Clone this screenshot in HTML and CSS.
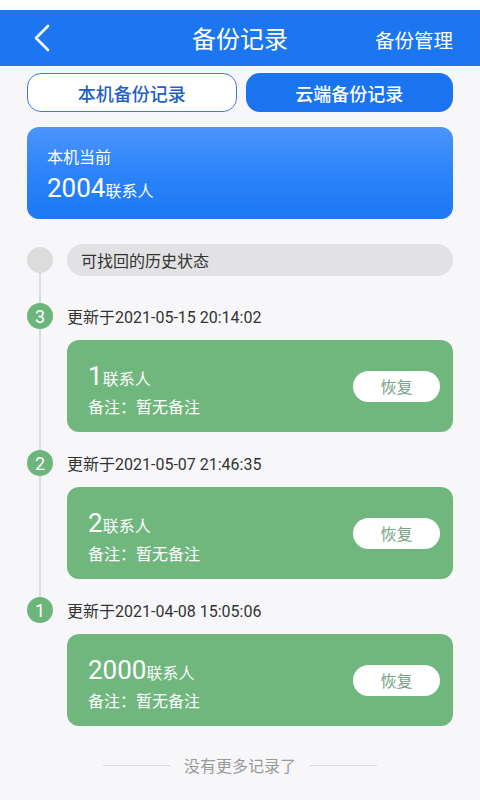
FILE: index.html
```html
<!DOCTYPE html>
<html lang="zh-CN">
<head>
<meta charset="utf-8">
<title>备份记录</title>
<link rel="stylesheet" href="styles.css">
</head>
<body>
<div class="status"></div>
<header class="header">
  <span class="back"><svg width="18" height="28" viewBox="0 0 18 28"><path d="M15 2 L3 14 L15 26" fill="none" stroke="#fff" stroke-width="2.6" stroke-linecap="round" stroke-linejoin="round"/></svg></span>
  <h1 class="title">备份记录</h1>
  <span class="manage">备份管理</span>
</header>
<div class="tabs">
  <div class="tab tab-outline">本机备份记录</div>
  <div class="tab tab-active">云端备份记录</div>
</div>
<section class="summary">
  <div class="summary-label">本机当前</div>
  <div class="summary-count"><span class="num">2004</span><span class="unit">联系人</span></div>
</section>
<section class="timeline">
  <div class="tl-head">
    <span class="dot dot-gray"></span>
    <div class="pill">可找回的历史状态</div>
  </div>
  <div class="item">
    <div class="item-row"><span class="dot dot-green">3</span><span class="time">更新于2021-05-15 20:14:02</span></div>
    <div class="card">
      <div class="card-text">
        <div class="card-count"><span class="num">1</span><span class="unit">联系人</span></div>
        <div class="card-note">备注：暂无备注</div>
      </div>
      <div class="restore">恢复</div>
    </div>
  </div>
  <div class="item">
    <div class="item-row"><span class="dot dot-green">2</span><span class="time">更新于2021-05-07 21:46:35</span></div>
    <div class="card">
      <div class="card-text">
        <div class="card-count"><span class="num">2</span><span class="unit">联系人</span></div>
        <div class="card-note">备注：暂无备注</div>
      </div>
      <div class="restore">恢复</div>
    </div>
  </div>
  <div class="item">
    <div class="item-row"><span class="dot dot-green">1</span><span class="time">更新于2021-04-08 15:05:06</span></div>
    <div class="card">
      <div class="card-text">
        <div class="card-count"><span class="num">2000</span><span class="unit">联系人</span></div>
        <div class="card-note">备注：暂无备注</div>
      </div>
      <div class="restore">恢复</div>
    </div>
  </div>
</section>
<footer class="end">
  <span class="end-line"></span>
  <span class="end-text">没有更多记录了</span>
  <span class="end-line"></span>
</footer>
</body>
</html>
```
FILE: styles.css
```css
* { box-sizing: border-box; }
html, body { margin: 0; padding: 0; }
body {
  width: 480px;
  height: 800px;
  overflow: hidden;
  background: #f7f7f9;
  font-family: Roboto, "Noto Sans CJK SC", sans-serif;
  color: #333;
}
.status { height: 10px; background: #fff; }
.header {
  height: 56px;
  background: #1c76f2;
  display: flex;
  align-items: center;
  padding: 0 27px 0 33px;
  color: #fff;
}
.back { display: flex; width: 20px; height: 28px; }
.title {
  flex: 1;
  margin: 0;
  text-align: center;
  font-size: 24px;
  font-weight: 400;
  padding-left: 52px;
  line-height: 56px;
  padding-top: 3px;
}
.manage { font-size: 19.5px; padding-top: 3px; }
.tabs {
  display: flex;
  gap: 9px;
  padding: 7px 27px 0;
}
.tab {
  flex: 1;
  height: 39px;
  border-radius: 14px;
  display: flex;
  align-items: center;
  justify-content: center;
  font-size: 18px;
  font-weight: 500;
}
.tab-outline {
  background: #fff;
  border: 1.5px solid #3a7ddc;
  color: #1f5fc6;
}
.tab-active {
  background: #1a74ef;
  color: #fff;
}
.summary {
  margin: 15px 27px 0;
  height: 92px;
  border-radius: 12px;
  background: linear-gradient(180deg, #4c94fb 0%, #2c84f8 50%, #1c77f5 100%);
  color: #fff;
  padding: 20px 20px 0;
}
.summary-label { font-size: 16px; line-height: 22px; }
.summary-count { margin-top: 4px; line-height: 30px; }
.num { font-size: 26px; }
.unit { font-size: 16px; }
.timeline {
  position: relative;
  padding: 25px 27px 0;
}
.timeline::before {
  content: "";
  position: absolute;
  left: 39px;
  top: 52px;
  width: 1.5px;
  height: 330px;
  background: #dcdcde;
}
.tl-head {
  display: flex;
  align-items: center;
  gap: 14px;
}
.dot {
  width: 26px;
  height: 26px;
  border-radius: 50%;
  flex: none;
  position: relative;
  display: flex;
  align-items: center;
  justify-content: center;
}
.dot-gray { background: #dcdcdd; }
.dot-green {
  background: #6cb57b;
  color: #fff;
  font-size: 18px;
}
.pill {
  flex: 1;
  height: 32px;
  border-radius: 16px;
  background: #e2e1e3;
  display: flex;
  align-items: center;
  padding-left: 14px;
  font-size: 16px;
  color: #333;
}
.item { margin-top: 27px; }
.item + .item { margin-top: 18px; }
.item-row {
  display: flex;
  align-items: center;
  gap: 14px;
  height: 26px;
}
.time { font-size: 16px; color: #333; }
.card {
  margin: 11px 0 0 40px;
  height: 92px;
  border-radius: 12px;
  background: #70b77e;
  color: #fff;
  display: flex;
  align-items: center;
  justify-content: space-between;
  padding: 0 13px 0 21px;
}
.card-text { padding-top: 8px; }
.card-count { line-height: 30px; }
.card-note { font-size: 16px; line-height: 22px; margin-top: 2px; }
.restore {
  width: 87px;
  height: 31px;
  border-radius: 16px;
  background: #fff;
  color: #76a386;
  font-size: 16px;
  display: flex;
  align-items: center;
  justify-content: center;
}
.end {
  display: flex;
  align-items: center;
  justify-content: center;
  gap: 14px;
  margin-top: 28px;
  height: 22px;
}
.end-line {
  width: 67px;
  height: 1px;
  background: #d9d9db;
}
.end-text { font-size: 16px; color: #999; }
```
